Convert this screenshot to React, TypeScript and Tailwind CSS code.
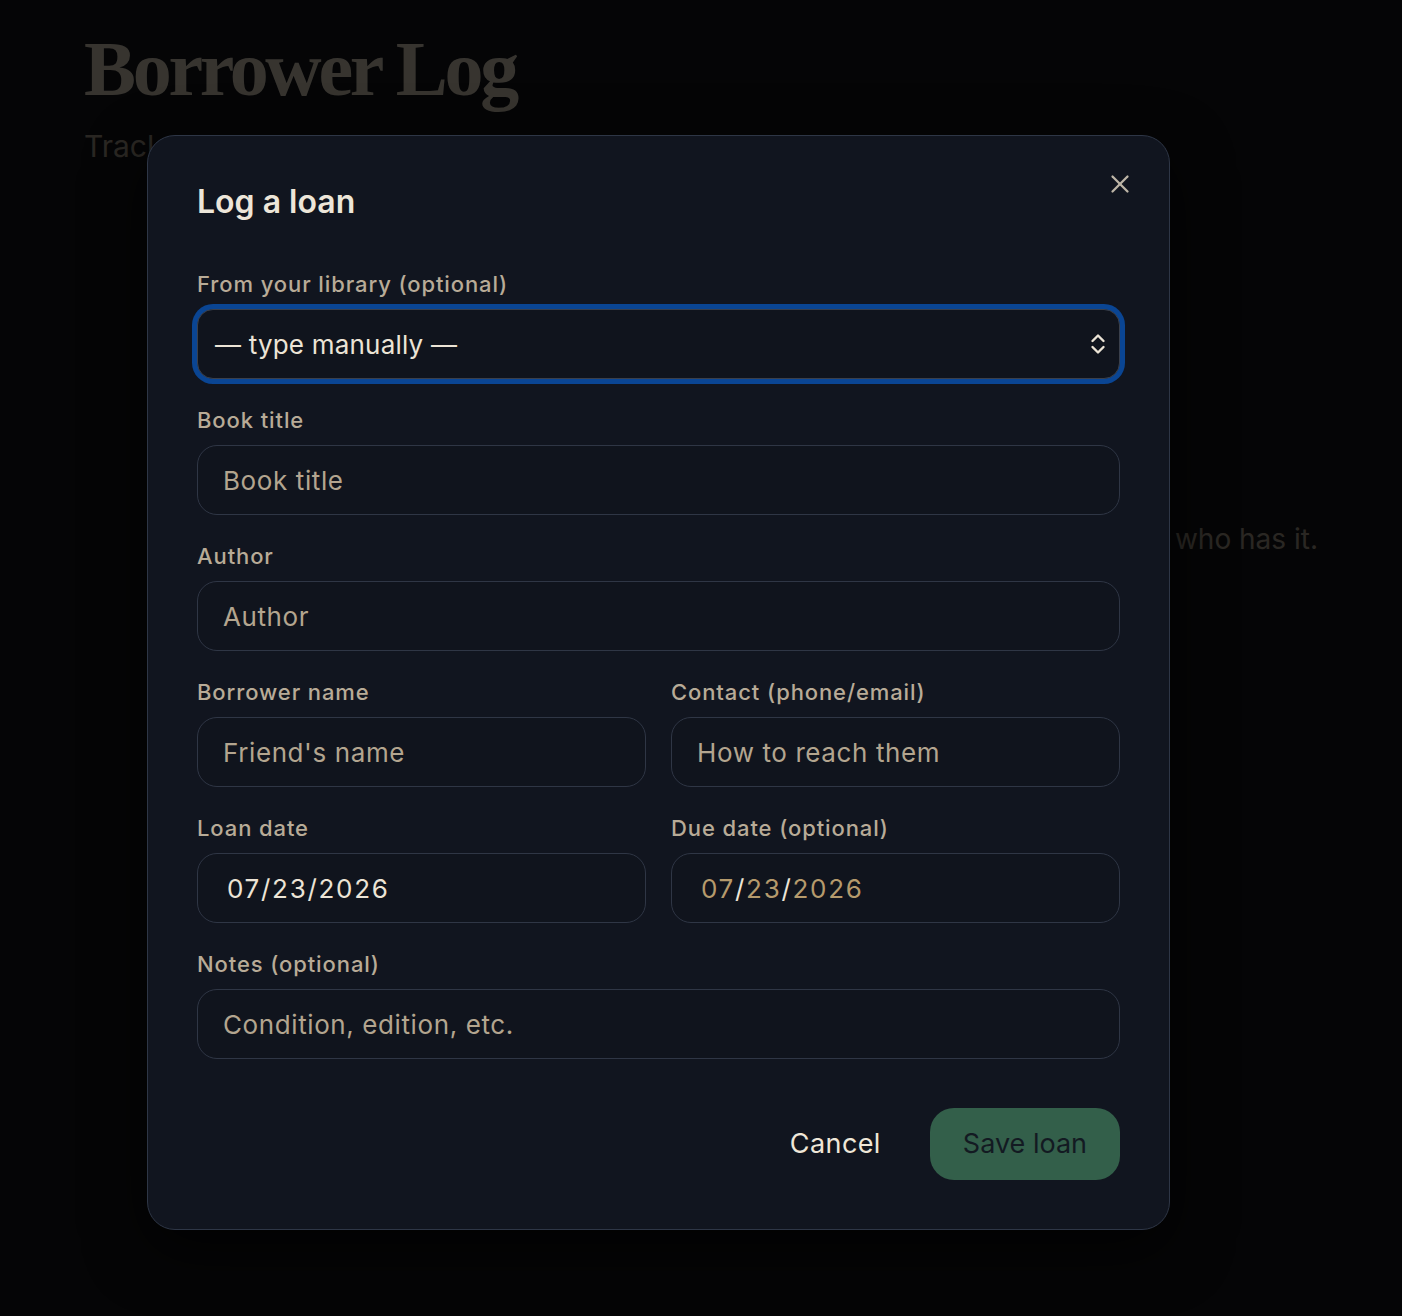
import React from 'react'
import { X } from 'lucide-react'

const font = { fontFamily: 'Inter, "Noto Sans", sans-serif' }

function Field({ label, children }: { label: string; children: React.ReactNode }) {
  return (
    <div className="flex flex-col">
      <label className="text-[22px] leading-[28px] font-medium tracking-[0.9px] text-[#b8ab97]">{label}</label>
      <div className="mt-[11px]">{children}</div>
    </div>
  )
}

function TextBox({ placeholder }: { placeholder: string }) {
  return (
    <input
      type="text"
      placeholder={placeholder}
      className="block w-full h-[70px] rounded-[20px] border border-[#2f3645] bg-[#10141d] px-[25px] text-[26px] tracking-[0.6px] text-[#ece4d6] placeholder:text-[#b3a58f] outline-none"
    />
  )
}

// Date fields are drawn as plain boxes so the segments keep their own colours
function DateBox({ value, empty }: { value: string[]; empty?: boolean }) {
  const seg = empty ? 'text-[#b59a6c]' : 'text-[#ece4d6]'
  return (
    <div className="flex items-center h-[70px] rounded-[20px] border border-[#2f3645] bg-[#10141d] pl-[29px] text-[26px] tracking-[1.7px]">
      <span className={seg}>{value[0]}</span>
      <span className="text-[#ece4d6]">/</span>
      <span className={seg}>{value[1]}</span>
      <span className="text-[#ece4d6]">/</span>
      <span className={seg}>{value[2]}</span>
    </div>
  )
}

function UpDown() {
  return (
    <svg width="16" height="22" viewBox="0 0 16 22" fill="none" stroke="#ece4d6" strokeWidth="2.4" strokeLinecap="round" strokeLinejoin="round">
      <path d="M2.5 8 L8 2.5 L13.5 8" />
      <path d="M2.5 14 L8 19.5 L13.5 14" />
    </svg>
  )
}

export default function App() {
  return (
    <div className="relative min-h-[1316px] bg-[#141519]" style={font}>
      {/* page behind the dialog */}
      <div className="px-[84px] pt-[24px]">
        <h1
          className="text-[78px] leading-[90px] font-bold tracking-[-3.3px] text-[#d9cfbd]"
          style={{ fontFamily: '"Liberation Serif", "DejaVu Serif", serif' }}
        >
          Borrower Log
        </h1>
        <p className="mt-[12px] text-[30px] leading-[40px] text-[#a89d8b]">
          Track the books you've lent out and when they're due back.
        </p>
        <p className="mt-[355px] text-right text-[28px] leading-[36px] text-[#a89d8b]">
          Nothing is on loan right now. Log a loan to keep track of who has it.
        </p>
      </div>

      {/* backdrop + dialog */}
      <div className="absolute inset-0 bg-black/75 pl-[147px] pt-[135px]">
        <div className="relative w-[1023px] rounded-[28px] border border-[#2e3646] bg-[#11151f] px-[49px] pt-[46px] pb-[49px] shadow-[0_20px_60px_rgba(0,0,0,0.7)]">
          <button className="absolute right-[34px] top-[33px] text-[#bdb5a6]" aria-label="Close">
            <X size={30} strokeWidth={1.8} />
          </button>

          <h2 className="text-[32px] leading-[40px] font-semibold text-[#ede6d9]">Log a loan</h2>

          <div className="mt-[48px] flex flex-col gap-[27px]">
            <Field label="From your library (optional)">
              <div className="flex items-center justify-between h-[70px] rounded-[16px] border border-[#3a404c] bg-[#10141d] pl-[17px] pr-[13px] ring-[5px] ring-[#0a4593]">
                <span className="text-[26px] tracking-[0.2px] text-[#ece4d6]">— type manually —</span>
                <UpDown />
              </div>
            </Field>

            <Field label="Book title">
              <TextBox placeholder="Book title" />
            </Field>

            <Field label="Author">
              <TextBox placeholder="Author" />
            </Field>

            <div className="grid grid-cols-2 gap-x-[25px]">
              <Field label="Borrower name">
                <TextBox placeholder="Friend's name" />
              </Field>
              <Field label="Contact (phone/email)">
                <TextBox placeholder="How to reach them" />
              </Field>
            </div>

            <div className="grid grid-cols-2 gap-x-[25px]">
              <Field label="Loan date">
                <DateBox value={['07', '23', '2026']} />
              </Field>
              <Field label="Due date (optional)">
                <DateBox value={['07', '23', '2026']} empty />
              </Field>
            </div>

            <Field label="Notes (optional)">
              <TextBox placeholder="Condition, edition, etc." />
            </Field>
          </div>

          <div className="mt-[49px] flex justify-end gap-[17px]">
            <button className="h-[72px] px-[32px] rounded-[24px] text-[27px] tracking-[0.4px] text-[#efe7d8]">Cancel</button>
            <button className="h-[72px] px-[33px] rounded-[24px] bg-[#335f4a] text-[27px] text-[#131a22]">Save loan</button>
          </div>
        </div>
      </div>
    </div>
  )
}
